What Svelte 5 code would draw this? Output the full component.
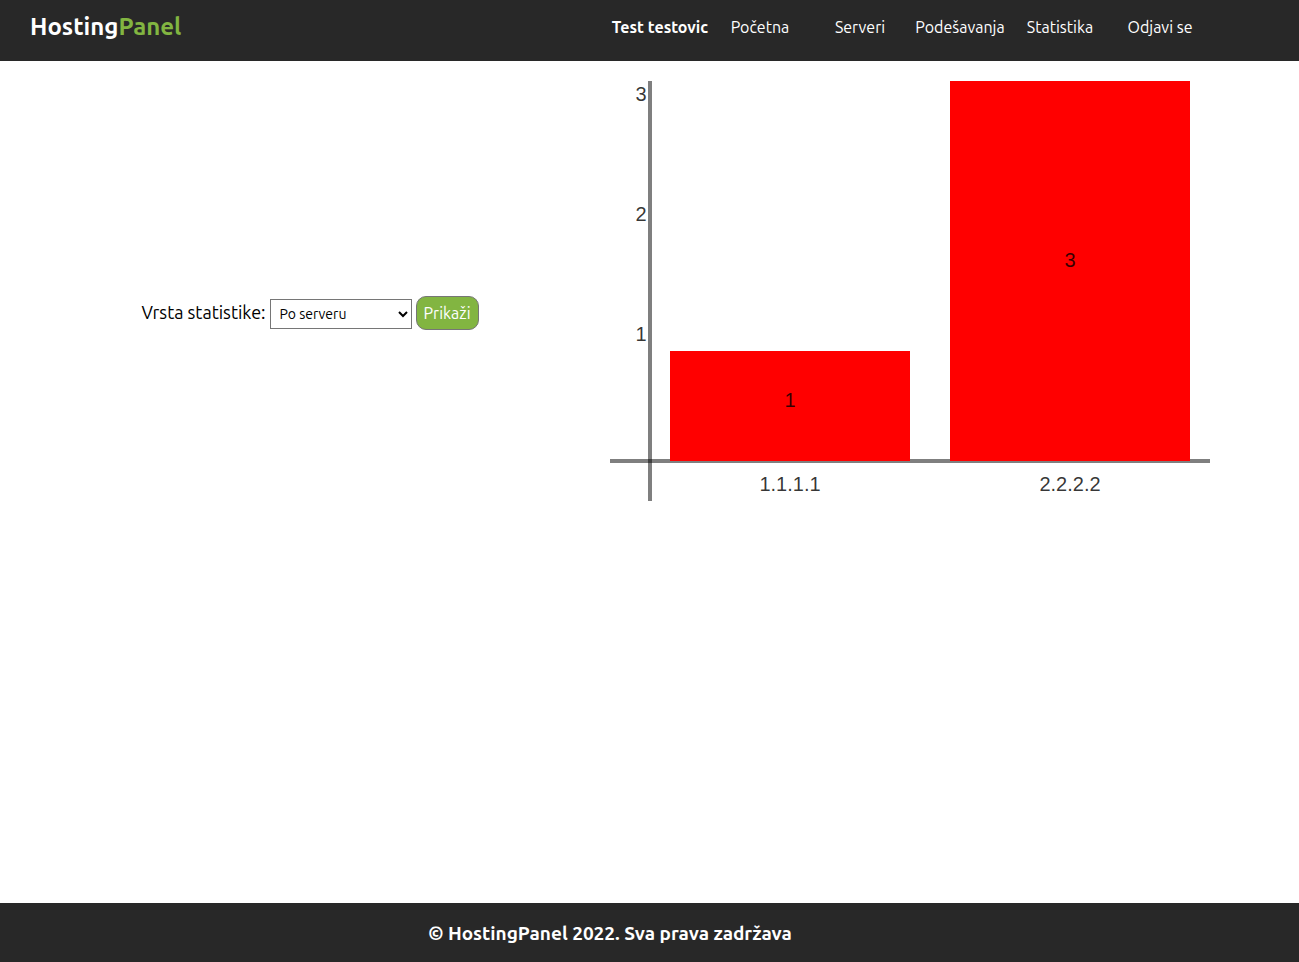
<script>
  const links = ['Početna', 'Serveri', 'Podešavanja', 'Statistika', 'Odjavi se'];
  const kinds = ['Po serveru', 'Po korisniku'];
  let kind = $state('Po serveru');

  const ticks = [
    { label: '3', y: 20 },
    { label: '2', y: 140 },
    { label: '1', y: 260 }
  ];
  const bars = [
    { label: '1.1.1.1', value: 1, x: 60, top: 270, valueY: 326 },
    { label: '2.2.2.2', value: 3, x: 340, top: 0, valueY: 186 }
  ];
</script>

<div class="page">
  <header>
    <div class="wrap columns">
      <a class="logo" href="#home">Hosting<span>Panel</span></a>
      <nav>
        <strong>Test testovic</strong>
        {#each links as link}
          <a href="#{link}">{link}</a>
        {/each}
      </nav>
    </div>
  </header>

  <main class="wrap columns">
    <form onsubmit={(e) => e.preventDefault()}>
      <label for="kind">Vrsta statistike:</label>
      <select id="kind" bind:value={kind}>
        {#each kinds as k}
          <option>{k}</option>
        {/each}
      </select>
      <button>Prikaži</button>
    </form>

    <svg class="chart" viewBox="0 0 600 420" role="img" aria-label="Statistika">
      <path class="axis" d="M40 0V420" />
      <path class="axis" d="M0 380H600" />
      {#each ticks as tick}
        <text x="31" y={tick.y}>{tick.label}</text>
      {/each}
      {#each bars as bar}
        <rect x={bar.x} y={bar.top} width="240" height={380 - bar.top} />
        <text x={bar.x + 120} y={bar.valueY}>{bar.value}</text>
        <text x={bar.x + 120} y="410">{bar.label}</text>
      {/each}
    </svg>
  </main>

  <footer>
    <p class="wrap">© HostingPanel 2022. Sva prava zadržava</p>
  </footer>
</div>

<style>
  :global(body) {
    margin: 0;
  }
  .page {
    display: flex;
    flex-direction: column;
    min-height: 100vh;
    background: #fff;
    color: #000;
    font: 16px/20px Ubuntu, "Noto Sans", sans-serif;
  }
  header,
  footer {
    background: #282828;
    color: #fff;
  }
  .wrap {
    max-width: 1200px;
    margin: 0 10px;
  }
  .columns {
    display: grid;
    grid-template-columns: 1fr 1fr;
  }
  header .wrap {
    padding: 11px 0 18px;
  }
  a {
    color: inherit;
    text-decoration: none;
  }
  .logo {
    padding-left: 20px;
    font-size: 24px;
    line-height: 32px;
    font-weight: 700;
  }
  .logo span {
    color: #82b541;
  }
  nav {
    display: grid;
    grid-template-columns: repeat(6, 1fr);
    align-items: center;
    text-align: center;
    white-space: nowrap;
    line-height: 32px;
  }
  nav strong {
    font-weight: 700;
  }
  main {
    flex: 1;
    align-items: start;
    padding-top: 20px;
  }
  form {
    display: flex;
    justify-content: center;
    align-items: baseline;
    gap: 4px;
    padding-top: 215px;
  }
  label {
    font-size: 18px;
  }
  select {
    width: 142px;
    height: 30px;
    padding: 0 5px;
    border: 1px solid #767676;
    border-radius: 0;
    background-color: #fff;
    color: #000;
    font-family: inherit;
    font-size: 14px;
  }
  button {
    height: 34px;
    padding: 0 7px;
    border: 1px solid #767676;
    border-radius: 10px;
    background: #82b541;
    color: #fff;
    font-family: inherit;
    font-size: 16px;
  }
  .chart {
    display: block;
    width: 100%;
  }
  .axis {
    stroke: #000;
    stroke-opacity: 0.5;
    stroke-width: 4;
  }
  .chart rect {
    fill: #f00;
  }
  .chart text {
    fill: #000;
    fill-opacity: 0.8;
    font-family: "Liberation Sans", Arial, sans-serif;
    font-size: 20px;
    text-anchor: middle;
  }
  footer p {
    padding: 18px 0 17px;
    text-align: center;
    font-size: 19px;
    line-height: 24px;
    font-weight: 700;
  }
</style>
